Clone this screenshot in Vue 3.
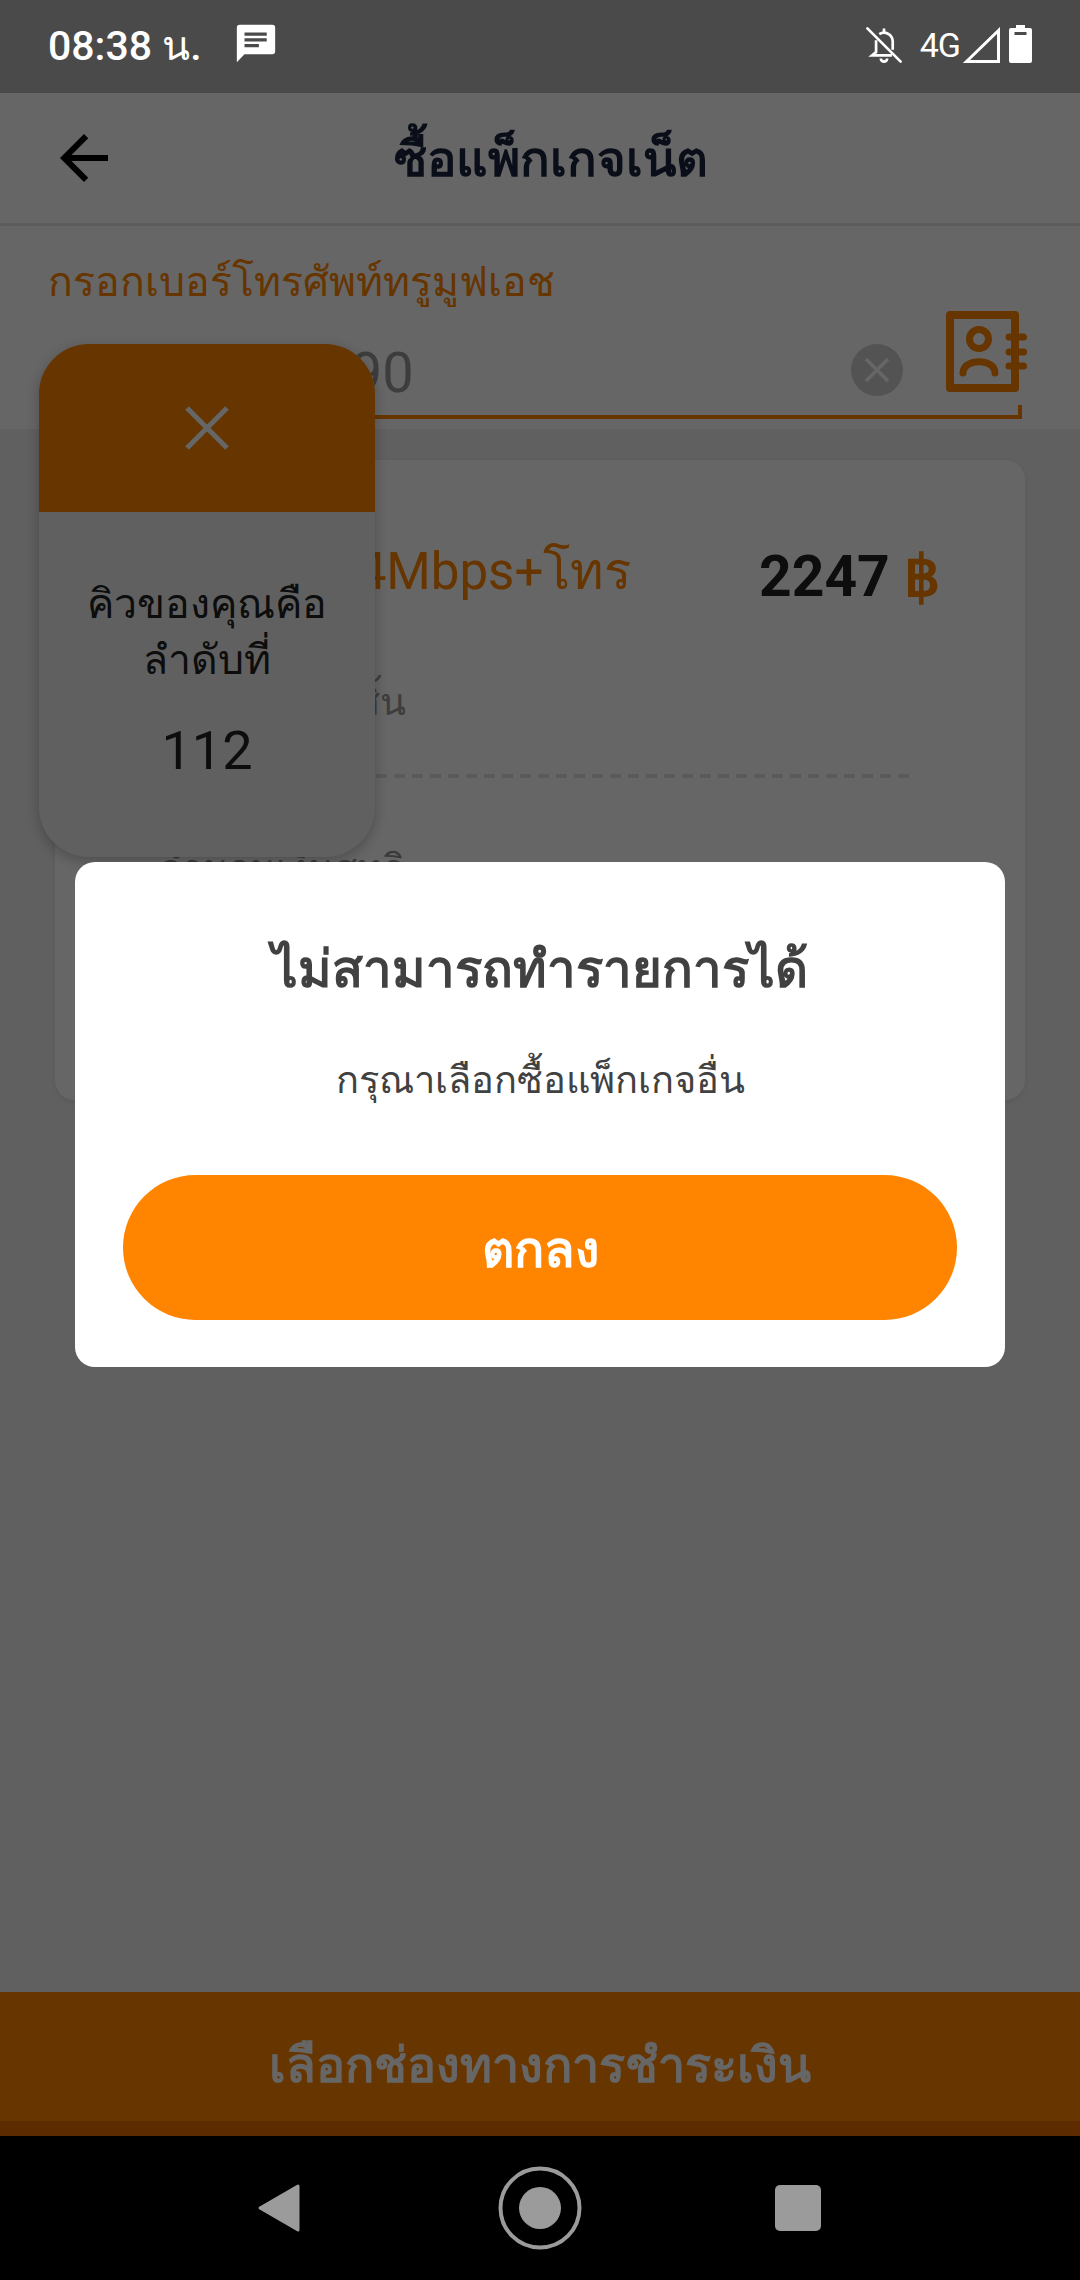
<script setup>
const statusTime = '08:38 น.'
const queueNumber = 112
</script>

<template>
  <div class="phone">
    <div class="status-bar">
      <div class="status-left">
        <span class="time">{{ statusTime }}</span>
        <svg class="msg-icon" width="46" height="46" viewBox="0 0 24 24">
          <path fill="#fff" fill-rule="evenodd" d="M3.500 2h17A1.500 1.500 0 0 1 22 3.500v12.300a1.500 1.500 0 0 1-1.500 1.500H6L2 21.500V3.500A1.500 1.500 0 0 1 3.500 2zM6 6v1.700h11.600V6zm0 3v1.700h11.600V9zm0 3v1.700h7.500V12z" />
        </svg>
      </div>
      <div class="status-right">
        <svg class="bell" width="38" height="38" viewBox="0 0 24 24" fill="none" stroke="#fff" stroke-width="1.700">
          <path d="M7 9v7.500L4.500 18.500H17M9 5.200a5.500 5.500 0 0 1 8.500 4.300v5.500" />
          <path d="M12 1.500v2.500M10 20.500a2 2 0 0 0 4 0" />
          <path d="M1.500 1.500l21 21" stroke-linecap="round" />
        </svg>
        <span class="net">4G</span>
        <svg class="signal" width="37" height="36" viewBox="0 0 37 36" fill="none" stroke="#fff" stroke-width="3">
          <path d="M3.500 34.500 35.500 3.500V34.500z" />
        </svg>
        <svg class="battery" width="23" height="38" viewBox="0 0 23 38">
          <path fill="#fff" d="M7 0h9v3h5a2 2 0 0 1 2 2v31a2 2 0 0 1-2 2H2a2 2 0 0 1-2-2V5a2 2 0 0 1 2-2h5zM5.500 7v3h12V7z" />
        </svg>
      </div>
    </div>

    <div class="screen">
      <header class="app-bar">
        <svg class="back" width="72" height="72" viewBox="0 0 24 24">
          <path fill="#000" d="M20 11H7.830l5.590-5.590L12 4l-8 8 8 8 1.410-1.410L7.830 13H20z" />
        </svg>
        <h1>ซื้อแพ็กเกจเน็ต</h1>
        <span></span>
      </header>

      <section class="phone-form">
        <label>กรอกเบอร์โทรศัพท์ทรูมูฟเอช</label>
        <div class="phone-row">
          <div class="phone-input">
            <span class="phone-value">081-234-5690</span>
            <span class="clear-btn">
              <svg width="26" height="26" viewBox="0 0 26 26" stroke="#fff" stroke-width="3.500">
                <path d="M2 2l22 22M24 2 2 24" />
              </svg>
            </span>
          </div>
          <svg class="contacts" width="81" height="81" viewBox="0 0 81 81" fill="none" stroke="#ff8400">
            <path stroke-width="8" stroke-linejoin="round" d="M4 4h65v73H4z" />
            <circle cx="33" cy="28" r="9.500" stroke-width="7" />
            <path stroke-width="7" stroke-linecap="round" d="M17 62c0-15 32-15 32 0" />
            <path stroke-width="7" stroke-linecap="round" d="M63 26h14.500M63 41h14.500M63 55h14.500" />
          </svg>
        </div>
        <div class="underline"></div>
      </section>

      <div class="content">
        <article class="package-card">
          <div class="card-top">
            <div class="card-name">เน็ตไม่อั้น 4Mbps+โทร</div>
            <div class="card-price">2247 <span class="baht">฿</span></div>
          </div>
          <div class="card-sub">ราคารวมทั้งสิ้น</div>
          <div class="card-dash"></div>
          <div class="card-detail">จำนวนเงินสุทธิ</div>
        </article>
      </div>

      <button class="pay-btn">เลือกช่องทางการชำระเงิน</button>
    </div>

    <div class="nav-bar">
      <svg width="44" height="50" viewBox="0 0 44 50">
        <path fill="#9b9b9b" stroke="#9b9b9b" stroke-width="3" stroke-linejoin="round" d="M41 3v44L3 25z" />
      </svg>
      <svg width="84" height="84" viewBox="0 0 84 84">
        <circle cx="42" cy="42" r="39.500" fill="none" stroke="#9b9b9b" stroke-width="4" />
        <circle cx="42" cy="42" r="21" fill="#9b9b9b" />
      </svg>
      <span class="nav-square"></span>
    </div>

    <div class="queue-popup">
      <div class="queue-head">
        <svg width="44" height="44" viewBox="0 0 44 44" stroke="#fff" stroke-width="5">
          <path d="M2 2l40 40M42 2 2 42" />
        </svg>
      </div>
      <div class="queue-body">
        <p>คิวของคุณคือ<br />ลำดับที่</p>
        <p class="queue-num">{{ queueNumber }}</p>
      </div>
    </div>

    <div class="scrim"></div>

    <div class="dialog">
      <h2>ไม่สามารถทำรายการได้</h2>
      <p>กรุณาเลือกซื้อแพ็กเกจอื่น</p>
      <button class="ok-btn">ตกลง</button>
    </div>
  </div>
</template>

<style>
html, body { margin: 0; padding: 0; background: #000; }
</style>

<style scoped>
.phone { position: relative; width: 1080px; height: 2280px; overflow: hidden; display: flex; flex-direction: column; font-family: Roboto, "Noto Sans", sans-serif; background: #f0f0f0; }

/* status bar */
.status-bar { height: 93px; flex: none; display: flex; justify-content: space-between; align-items: flex-start; padding: 0 48px; box-sizing: border-box; background: #4a4a4a; color: #fff; position: relative; z-index: 5; }
.status-left { display: flex; align-items: flex-start; }
.time { font-size: 41px; font-weight: 500; line-height: 50px; margin-top: 21px; }
.msg-icon { margin: 21px 0 0 31px; }
.status-right { display: flex; align-items: flex-start; }
.bell { margin-top: 26px; }
.net { font-size: 34px; letter-spacing: -1px; line-height: 40px; margin: 25px 0 0 17px; }
.signal { margin: 27px 0 0 3px; }
.battery { margin: 25px 0 0 9px; }

.screen { flex: 1; display: flex; flex-direction: column; min-height: 0; }

/* header */
.app-bar { height: 133px; flex: none; background: #fff; border-bottom: 3px solid #e6e6e6; box-sizing: border-box; display: grid; grid-template-columns: 1fr auto 1fr; align-items: center; padding: 0 26px 0 48px; }
.app-bar h1 { margin: 0; padding-top: 2px; font-size: 49px; font-weight: 700; color: #1a2340; }

/* phone number */
.phone-form { background: #fff; height: 203px; flex: none; box-sizing: border-box; padding: 31px 58px 0 48px; }
.phone-form label { display: block; color: #ff8400; font-size: 41px; line-height: 50px; }
.phone-row { display: flex; align-items: flex-start; gap: 43px; margin-top: 4px; }
.phone-input { flex: 1; display: flex; justify-content: space-between; align-items: flex-start; margin-top: 33px; }
.phone-value { font-size: 56px; line-height: 52px; color: #999; padding: 3px 0 0 20px; }
.clear-btn { width: 52px; height: 52px; border-radius: 50%; background: #cfcfcf; display: flex; align-items: center; justify-content: center; }
.contacts { flex: none; margin-right: -5px; }
.underline { height: 14px; box-sizing: border-box; border-bottom: 4px solid #ff8400; border-right: 4px solid #ff8400; margin-top: 6px; }

/* package card */
.content { flex: 1; padding: 31px 55px; }
.package-card { background: #fff; border-radius: 20px; height: 640px; box-sizing: border-box; padding: 70px 85px 0 79px; box-shadow: 0 2px 6px rgba(0, 0, 0, 0.08); }
.card-top { display: flex; justify-content: space-between; align-items: center; }
.card-name { color: #ff8400; font-size: 51px; white-space: nowrap; margin-bottom: 12px; }
.card-price { font-size: 57px; font-weight: 700; color: #222; white-space: nowrap; }
.baht { color: #ff8400; font-family: "Liberation Sans", sans-serif; }
.card-sub { color: #999; font-size: 38px; margin: 48px 0 0 26px; white-space: nowrap; }
.card-dash { height: 4px; background: repeating-linear-gradient(90deg, #e0e0e0 0 11px, transparent 11px 18px); margin: 42px 30px 0 26px; }
.card-detail { color: #8f8f8f; font-size: 38px; margin: 59px 0 0 26px; white-space: nowrap; }

.pay-btn { height: 144px; flex: none; border: none; border-bottom: 15px solid #e66c00; background: #ff8400; color: #fff; font-size: 48.500px; font-weight: 700; font-family: inherit; padding: 16px 0 0; }

/* nav */
.nav-bar { height: 144px; flex: none; background: #000; display: flex; align-items: center; position: relative; z-index: 5; padding-left: 257px; gap: 197px; }
.nav-square { width: 46px; height: 46px; border-radius: 5px; background: #9b9b9b; margin-left: -4px; }

/* queue popup */
.queue-popup { position: absolute; left: 39px; top: 344px; width: 336px; height: 513px; border-radius: 50px; overflow: hidden; background: #f0f0f0; box-shadow: 0 4px 14px rgba(0, 0, 0, 0.25); }
.queue-head { height: 168px; background: #ff8400; display: flex; align-items: center; justify-content: center; }
.queue-body { text-align: center; color: #222; font-size: 41px; padding-top: 64px; }
.queue-body p { margin: 0; line-height: 56px; }
.queue-body .queue-num { font-size: 54px; margin-top: 33px; line-height: 60px; }

.scrim { position: absolute; left: 0; right: 0; top: 93px; bottom: 144px; background: rgba(0, 0, 0, 0.6); }

/* dialog */
.dialog { position: absolute; left: 75px; top: 862px; width: 930px; height: 505px; box-sizing: border-box; padding: 73px 48px 0; background: #fff; border-radius: 20px; text-align: center; }
.dialog h2 { margin: 0; font-size: 51px; line-height: 70px; font-weight: 700; color: #414141; }
.dialog p { margin: 50px 0 0; font-size: 38px; line-height: 50px; color: #414141; }
.ok-btn { display: block; width: 100%; height: 145px; margin-top: 70px; border: none; border-radius: 73px; background: #ff8400; color: #fff; font-size: 50px; font-weight: 700; font-family: inherit; padding: 4px 0 0; }
</style>
